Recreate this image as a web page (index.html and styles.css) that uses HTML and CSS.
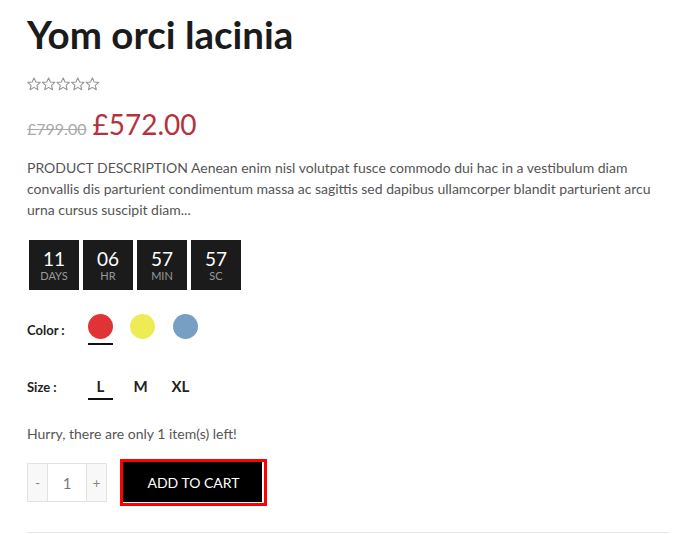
FILE: index.html
```html
<!DOCTYPE html>
<html>
<head>
<meta charset="utf-8">
<link rel="stylesheet" href="styles.css">
</head>
<body>
<div class="product">
  <h1 class="title">Yom orci lacinia</h1>
  <div class="stars">
    <svg width="73" height="14" viewBox="0 0 73 14">
      <defs>
        <path id="st" d="M7 0.9 L8.8 5 L13.2 5.4 L9.9 8.3 L10.9 12.7 L7 10.4 L3.1 12.7 L4.1 8.3 L0.8 5.4 L5.2 5 Z" fill="none" stroke="#959595" stroke-width="1.1" stroke-linejoin="round"/>
      </defs>
      <use href="#st" x="0"/>
      <use href="#st" x="14.6"/>
      <use href="#st" x="29.2"/>
      <use href="#st" x="43.8"/>
      <use href="#st" x="58.4"/>
    </svg>
  </div>
  <div class="price">
    <del class="old">£799.00</del>
    <span class="new">£572.00</span>
  </div>
  <p class="desc">PRODUCT DESCRIPTION Aenean enim nisl volutpat fusce commodo dui hac in a vestibulum diam convallis dis parturient condimentum massa ac sagittis sed dapibus ullamcorper blandit parturient arcu urna cursus suscipit diam...</p>
  <div class="countdown">
    <div class="cd-box"><span class="cd-num">11</span><span class="cd-label">Days</span></div>
    <div class="cd-box"><span class="cd-num">06</span><span class="cd-label">Hr</span></div>
    <div class="cd-box"><span class="cd-num">57</span><span class="cd-label">Min</span></div>
    <div class="cd-box"><span class="cd-num">57</span><span class="cd-label">Sc</span></div>
  </div>
  <div class="opt-row color-row">
    <span class="opt-label">Color :</span>
    <div class="swatches">
      <span class="swatch active"><span class="dot red"></span></span>
      <span class="swatch"><span class="dot yellow"></span></span>
      <span class="swatch"><span class="dot blue"></span></span>
    </div>
  </div>
  <div class="opt-row size-row">
    <span class="opt-label">Size :</span>
    <div class="sizes">
      <span class="size active">L</span>
      <span class="size">M</span>
      <span class="size">XL</span>
    </div>
  </div>
  <p class="stock">Hurry, there are only 1 item(s) left!</p>
  <div class="cart">
    <div class="qty">
      <span class="qty-btn">-</span>
      <span class="qty-val">1</span>
      <span class="qty-btn">+</span>
    </div>
    <button class="add">ADD TO CART</button>
  </div>
  <hr class="divider">
</div>
</body>
</html>
```

FILE: styles.css
```css
* { box-sizing: border-box; }
html, body { margin: 0; padding: 0; background: #fff; }
body {
  font-family: Lato, "Open Sans", "Liberation Sans", sans-serif;
  color: #555;
  width: 690px;
  height: 534px;
  overflow: hidden;
}
.product {
  padding: 0 21px 0 27px;
}
.title {
  margin: 0;
  padding-top: 11px;
  font-size: 38.5px;
  line-height: 46px;
  font-weight: 700;
  color: #1b1b1b;
}
.stars {
  margin-top: 20px;
  height: 14px;
  display: flex;
}
.stars svg { display: block; }
.price {
  margin-top: 16px;
  display: flex;
  align-items: baseline;
  gap: 6px;
  height: 36px;
}
.old {
  font-size: 16px;
  color: #a9a9a9;
}
.new {
  font-size: 28px;
  color: #b3333d;
}
.desc {
  margin: 14px 0 0;
  font-size: 14px;
  line-height: 21px;
  color: #555;
}
.countdown {
  margin-top: 20px;
  padding-left: 2px;
  display: flex;
  gap: 4px;
}
.cd-box {
  width: 50px;
  height: 50px;
  background: #1b1b1b;
  display: flex;
  flex-direction: column;
  align-items: center;
  justify-content: center;
  padding-top: 1px;
}
.cd-num {
  color: #fff;
  font-size: 19px;
  line-height: 20px;
}
.cd-label {
  color: #9a9a9a;
  font-size: 11px;
  line-height: 13px;
  text-transform: uppercase;
}
.opt-row {
  display: flex;
  align-items: center;
}
.opt-label {
  width: 61px;
  font-size: 13px;
  font-weight: 700;
  color: #222;
}
.color-row {
  margin-top: 24px;
}
.swatches {
  display: flex;
  gap: 17px;
}
.swatch {
  width: 25px;
  height: 31px;
  display: flex;
  flex-direction: column;
  padding-bottom: 4px;
  border-bottom: 2px solid transparent;
}
.swatch.active { border-bottom-color: #111; }
.dot {
  width: 25px;
  height: 25px;
  border-radius: 50%;
  display: block;
}
.red { background: #e03336; }
.yellow { background: #eeec55; }
.blue { background: #769fc3; }
.swatch:nth-child(3) { margin-left: 1px; }
.size-row {
  margin-top: 32px;
}
.size-row .opt-label { align-self: flex-start; padding-top: 2px; }
.sizes {
  display: flex;
  gap: 15px;
}
.size {
  width: 25px;
  height: 23px;
  text-align: center;
  font-size: 15px;
  line-height: 19px;
  font-weight: 700;
  color: #222;
  border-bottom: 2px solid transparent;
}
.size.active { border-bottom-color: #111; }
.stock {
  margin: 23px 0 0;
  font-size: 14px;
  line-height: 21px;
  color: #555;
}
.cart {
  margin-top: 18px;
  display: flex;
  align-items: center;
  gap: 16px;
}
.qty {
  display: flex;
  height: 39px;
  border: 1px solid #e2e2e2;
}
.qty-btn {
  width: 19px;
  display: flex;
  align-items: center;
  justify-content: center;
  background: #f8f8f8;
  color: #888;
  font-size: 14px;
}
.qty-val {
  width: 40px;
  display: flex;
  align-items: center;
  justify-content: center;
  border-left: 1px solid #e2e2e2;
  border-right: 1px solid #e2e2e2;
  color: #777;
  font-size: 15px;
}
.add {
  width: 141px;
  height: 41px;
  background: #000;
  color: #fff;
  border: none;
  font-family: inherit;
  font-size: 14px;
  outline: 3px solid #f00;
  outline-offset: 0;
  box-shadow: inset -2px -1px 0 #fff;
  padding: 0;
}
.divider {
  margin: 29px 0 0;
  border: none;
  border-top: 1px solid #e6e6e6;
}
```
